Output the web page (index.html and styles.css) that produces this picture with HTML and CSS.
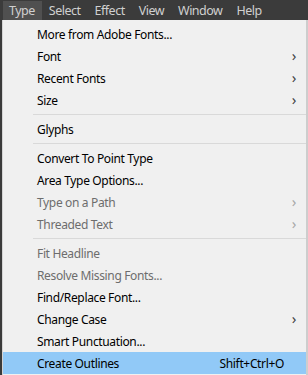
FILE: index.html
```html
<!DOCTYPE html>
<html>
<head>
<meta charset="utf-8">
<link rel="stylesheet" href="styles.css">
</head>
<body>
<div class="app">
  <nav class="menubar">
    <span class="mb-item active">Type</span>
    <span class="mb-item">Select</span>
    <span class="mb-item">Effect</span>
    <span class="mb-item">View</span>
    <span class="mb-item">Window</span>
    <span class="mb-item">Help</span>
  </nav>
  <div class="stage">
    <div class="menu">
      <div class="row"><span class="label">More from Adobe Fonts...</span></div>
      <div class="row"><span class="label">Font</span><span class="arrow">›</span></div>
      <div class="row"><span class="label">Recent Fonts</span><span class="arrow">›</span></div>
      <div class="row"><span class="label">Size</span><span class="arrow">›</span></div>
      <div class="sep"></div>
      <div class="row"><span class="label">Glyphs</span></div>
      <div class="sep"></div>
      <div class="row"><span class="label">Convert To Point Type</span></div>
      <div class="row"><span class="label">Area Type Options...</span></div>
      <div class="row disabled"><span class="label">Type on a Path</span><span class="arrow">›</span></div>
      <div class="row disabled"><span class="label">Threaded Text</span><span class="arrow">›</span></div>
      <div class="sep"></div>
      <div class="row disabled"><span class="label">Fit Headline</span></div>
      <div class="row disabled"><span class="label">Resolve Missing Fonts...</span></div>
      <div class="row"><span class="label">Find/Replace Font...</span></div>
      <div class="row"><span class="label">Change Case</span><span class="arrow">›</span></div>
      <div class="row"><span class="label">Smart Punctuation...</span></div>
      <div class="row hl"><span class="label">Create Outlines</span><span class="shortcut">Shift+Ctrl+O</span></div>
    </div>
  </div>
</div>
</body>
</html>
```
FILE: styles.css
```css
html, body {
  margin: 0;
  padding: 0;
  width: 308px;
  height: 375px;
  overflow: hidden;
  background: #3a3a3a;
}
.app {
  font-family: "Noto Sans", "Open Sans", sans-serif;
}
.menubar {
  height: 20px;
  background: #3b3b3b;
  display: flex;
  align-items: stretch;
  padding-left: 3px;
  padding-top: 1px;
  box-sizing: border-box;
}
.mb-item {
  color: #d0d0d0;
  font-size: 12.5px;
  letter-spacing: -0.5px;
  line-height: 19px;
  padding: 0 7px 0 6px;
  margin-right: 1px;
}
.mb-item.active {
  background: #505050;
}
.stage {
  display: flex;
  padding-left: 2px;
  height: 355px;
  background: #3a3a3a;
}
.menu {
  width: 306px;
  background: #f0f0f0;
  border-left: 1px solid #d4d4d4;
  border-right: 2px solid #cdcdcd;
  padding-top: 3px;
  box-sizing: border-box;
  display: flex;
  flex-direction: column;
}
.row {
  height: 22px;
  display: flex;
  align-items: center;
  padding-left: 34px;
  padding-right: 10px;
  font-size: 12px;
  letter-spacing: -0.35px;
  color: #000;
}
.row .label {
  flex: 1;
}
.row .arrow {
  font-size: 15px;
  line-height: 1;
  color: #444;
  margin-top: -2px;
}
.row.disabled {
  color: #6d6d6d;
}
.row.disabled .arrow {
  color: #a8a8a8;
}
.row.hl {
  background: #91c9f7;
}
.shortcut {
  margin-right: 12px;
}
.sep {
  height: 7px;
  display: flex;
  align-items: center;
  padding-left: 30px;
}
.sep::after {
  content: "";
  flex: 1;
  height: 1px;
  background: #d9d9d9;
}
```
